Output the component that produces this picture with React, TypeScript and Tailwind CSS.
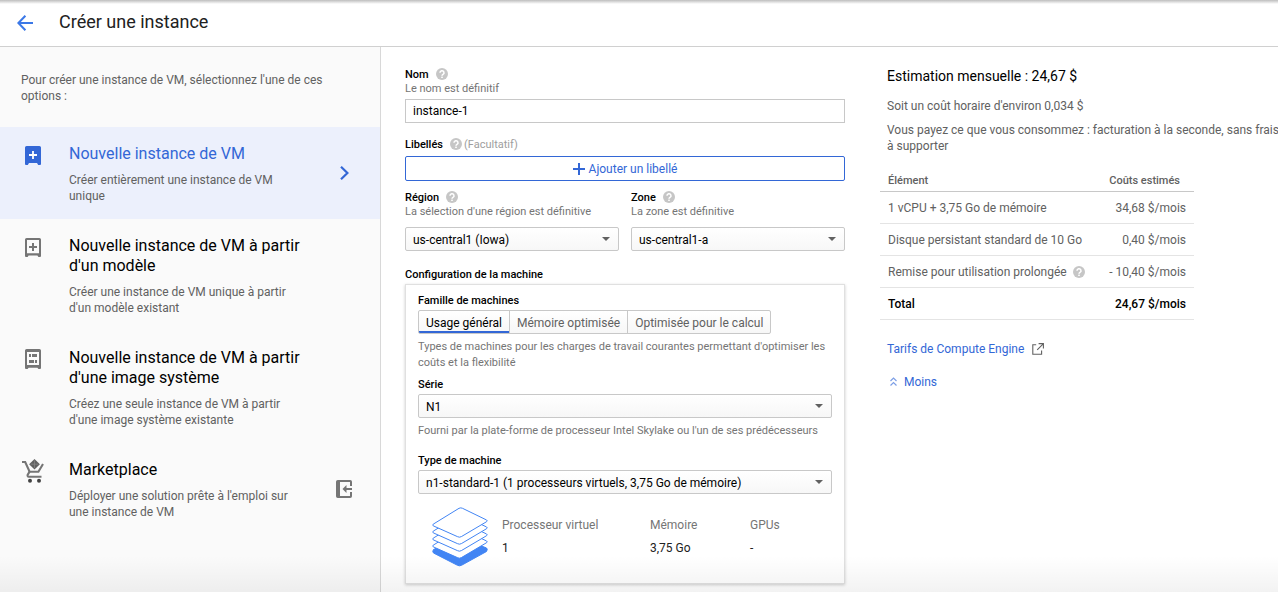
import type { ReactNode } from "react";

function HelpIcon() {
  return (
    <svg viewBox="0 0 12 12" className="size-3 shrink-0" role="img" aria-label="Aide">
      <circle cx="6" cy="6" r="6" fill="#c6c6c6" />
      <path d="M4 4.700a2 2 0 1 1 3 1.700c-.6.400-1 .7-1 1.300" fill="none" stroke="#fff" strokeWidth="1.500" />
      <rect x="5.200" y="8.600" width="1.600" height="1.400" fill="#fff" />
    </svg>
  );
}

function BackIcon() {
  return (
    <svg viewBox="0 0 16 16" className="size-4" fill="none" stroke="#3b78e7" strokeWidth="2" aria-hidden="true">
      <path d="M16 8H1.6M8.4.8 1.4 8l7 7.2" />
    </svg>
  );
}

function NewVmIcon() {
  return (
    <svg viewBox="0 0 16 19" className="h-[19px] w-4" aria-hidden="true">
      <path d="M1.6 0h12.8A1.6 1.6 0 0 1 16 1.6V18a1 1 0 0 1-1 1h-1.800L12 17H4l-1.200 2H1a1 1 0 0 1-1-1V1.6A1.6 1.6 0 0 1 1.6 0z" fill="#3367d6" />
      <path d="M8 5v8M4 9h8" stroke="#fff" strokeWidth="1.8" />
    </svg>
  );
}

function TemplateIcon() {
  return (
    <svg viewBox="0 0 16 19" className="h-[19px] w-4" aria-hidden="true">
      <path
        fillRule="evenodd"
        d="M1.6 0h12.8A1.6 1.6 0 0 1 16 1.6V18a1 1 0 0 1-1 1h-1.6l-1-1.6H3.600L2.600 19H1a1 1 0 0 1-1-1V1.6A1.6 1.6 0 0 1 1.6 0zM2 2v13.200h12V2z"
        fill="#757575"
      />
      <path d="M8 5v8M4 9h8" stroke="#757575" strokeWidth="2" />
    </svg>
  );
}

function ImageIcon() {
  return (
    <svg viewBox="0 0 16 20" className="h-5 w-4" aria-hidden="true">
      <path
        fillRule="evenodd"
        d="M1.6 0h12.8A1.6 1.6 0 0 1 16 1.6V19a1 1 0 0 1-1 1h-1.6l-1-1.2H3.600L2.600 20H1a1 1 0 0 1-1-1V1.6A1.6 1.6 0 0 1 1.6 0zM2 3v13h12V3z"
        fill="#757575"
      />
      <path d="M4 5h2v3H4zM7 5h5v3H7zM4 11h5v3H4zM10 11h2v3h-2z" fill="#757575" />
    </svg>
  );
}

function CartIcon() {
  return (
    <svg viewBox="0 0 22 24" className="h-6 w-[22px]" aria-hidden="true">
      <path d="M0 3h3.200l4.400 9.800h8.800L21 5" fill="none" stroke="#757575" strokeWidth="2.100" />
      <path d="m7.600 12.600-1.900 3.200c-.4.900 0 1.900 1 1.900h12.800" fill="none" stroke="#757575" strokeWidth="2.100" />
      <path d="m12.500 0 5.400 5.200-5.400 5.400-5.400-5.400z" fill="#616161" />
      <path d="M12.500 1.500v7.400M8.600 5.200h7.800" stroke="#8a8a8a" strokeWidth=".7" />
      <circle cx="8" cy="21.800" r="2" fill="#424242" />
      <circle cx="17" cy="21.800" r="2" fill="#424242" />
    </svg>
  );
}

function LaunchIcon() {
  return (
    <svg viewBox="0 0 16 18" className="h-[18px] w-4" aria-hidden="true">
      <path
        d="M1.800 0h12.400A1.800 1.800 0 0 1 16 1.800V6h-2V2H4v14h10v-4h2v4.200a1.800 1.800 0 0 1-1.800 1.800H1.800A1.800 1.800 0 0 1 0 16.200V1.800A1.800 1.800 0 0 1 1.800 0z"
        fill="#757575"
      />
      <path d="M6.500 9 10.500 5v3H16v2h-5.500v3z" fill="#757575" />
    </svg>
  );
}

function ChevronIcon() {
  return (
    <svg viewBox="0 0 9 14" className="h-3.5 w-[9px]" fill="none" stroke="#3367d6" strokeWidth="2.200" aria-hidden="true">
      <path d="m1 .8 6.400 6.200L1 13.200" />
    </svg>
  );
}

function ExternalIcon() {
  return (
    <svg viewBox="0 0 12 12" className="size-3" fill="none" stroke="#616161" strokeWidth="1.100" aria-hidden="true">
      <path d="M4.200 1.800H.8v9.400h8.800V7.600M6.600.6h4.800v4.800M11.200.8 5.200 6.800" />
    </svg>
  );
}

function StackIcon() {
  return (
    <svg viewBox="0 0 56 60" className="h-[60px] w-14 shrink-0" aria-hidden="true">
      <path
        d="M1.500 42.500 26 31q2-1 4 0l24.500 10q1.500 1 0 3.500L29.500 58.300q-2 1-4 0L1.500 46q-1.500-1.500 0-3.500z"
        fill="#4285f4"
        stroke="#4285f4"
      />
      {[21, 14, 7, 0].map((y) => (
        <path
          key={y}
          transform={`translate(0 ${y})`}
          d="M1.200 17.200 27 1.300q1.800-.9 3.500 0L54.600 13q1.200.8 0 1.700L29.400 29.600q-2 1.200-4 0L1.200 18.800q-1-.8 0-1.600z"
          fill="#fff"
          stroke="#4285f4"
          strokeWidth="1"
        />
      ))}
    </svg>
  );
}

type OptionProps = {
  icon: ReactNode;
  title: string;
  text: string;
  selected?: boolean;
  trailing?: ReactNode;
};

function Option({ icon, title, text, selected, trailing }: OptionProps) {
  return (
    <a href="#" className={`flex pt-[17px] pr-[27px] pb-[15px] pl-[22px] ${selected ? "bg-[#ecf0fc]" : ""}`}>
      <span className="-mt-px flex h-6 w-[22px] shrink-0 items-center justify-center">{icon}</span>
      <span className="ml-[25px] flex w-[238px] flex-col gap-2">
        <span className={`text-base leading-5 ${selected ? "text-[#3367d6]" : "text-black"}`}>{title}</span>
        <span className="text-xs leading-4 text-[#616161]">{text}</span>
      </span>
      <span className="ml-auto flex w-[18px] items-center justify-center pb-0.5">{trailing}</span>
    </a>
  );
}

function Label({ htmlFor, children, help }: { htmlFor: string; children: ReactNode; help?: boolean }) {
  return (
    <div className="flex h-3.5 items-center gap-[7px]">
      <label htmlFor={htmlFor} className="text-[11px] leading-[14px] font-medium text-black">
        {children}
      </label>
      {help && (
        <span className="pb-0.5">
          <HelpIcon />
        </span>
      )}
    </div>
  );
}

function Select({ id, value }: { id: string; value: string }) {
  return (
    <div className="relative">
      <select
        id={id}
        className="block h-6 w-full appearance-none rounded-[2px] border border-[#c8c8c8] bg-linear-to-b from-white to-[#f7f7f7] px-[7px] pt-0.5 text-xs text-black"
      >
        <option>{value}</option>
      </select>
      <svg viewBox="0 0 8 4" className="pointer-events-none absolute top-2.5 right-[9px] h-1 w-2" aria-hidden="true">
        <path d="M0 0h8L4 4z" fill="#616161" />
      </svg>
    </div>
  );
}

const hint = "text-[11px] leading-[14px] text-[#757575]";

function Form() {
  return (
    <form className="w-[440px] shrink-0">
      <Label htmlFor="name" help>Nom</Label>
      <p className={hint}>Le nom est définitif</p>
      <input
        id="name"
        defaultValue="instance-1"
        className="mt-[3px] block h-6 w-full border border-[#c8c8c8] bg-white px-[7px] text-xs text-black"
      />

      <div className="mt-[15px] flex items-center gap-0.5">
        <Label htmlFor="labels" help>Libellés</Label>
        <span className="text-[11px] leading-[14px] text-[#9e9e9e]">(Facultatif)</span>
      </div>
      <button
        id="labels"
        type="button"
        className="mt-1 flex h-[25px] w-full items-center justify-center gap-1 rounded-[2px] border border-[#3367d6] text-xs text-[#3367d6]"
      >
        <svg viewBox="0 0 12 12" className="size-3" stroke="#3367d6" strokeWidth="2" aria-hidden="true">
          <path d="M6 0v12M0 6h12" />
        </svg>
        Ajouter un libellé
      </button>

      <div className="mt-2.5 grid grid-cols-2 gap-3">
        <div>
          <Label htmlFor="region" help>Région</Label>
          <p className={`${hint} mb-2`}>La sélection d'une région est définitive</p>
          <Select id="region" value="us-central1 (Iowa)" />
        </div>
        <div>
          <Label htmlFor="zone" help>Zone</Label>
          <p className={`${hint} mb-2`}>La zone est définitive</p>
          <Select id="zone" value="us-central1-a" />
        </div>
      </div>

      <h2 className="mt-[17px] text-[11px] leading-[14px] font-medium text-black">Configuration de la machine</h2>
      <section className="mt-0.5 border border-[#e0e0e0] px-3 pt-[9px] pb-4 shadow-[0_1px_3px_rgba(0,0,0,0.2)]">
        <h3 className="text-[11px] leading-[14px] font-medium text-black">Famille de machines</h3>
        <div
          role="tablist"
          className="mt-0.5 inline-flex h-6 overflow-hidden rounded-[2px] border border-[#c8c8c8] bg-linear-to-b from-white to-[#f7f7f7] align-top text-xs text-[#616161]"
        >
          <button type="button" role="tab" aria-selected="true" className="border-b-2 border-[#3367d6] px-[7px] pt-1 text-black">
            Usage général
          </button>
          <button type="button" role="tab" aria-selected="false" className="border-x border-[#c8c8c8] px-[7px] pt-0.5">
            Mémoire optimisée
          </button>
          <button type="button" role="tab" aria-selected="false" className="px-[7px] pt-0.5">
            Optimisée pour le calcul
          </button>
        </div>
        <p className="mt-[5px] mb-[7px] text-[11px] leading-4 text-[#757575]">
          Types de machines pour les charges de travail courantes permettant d'optimiser les coûts et la flexibilité
        </p>
        <Label htmlFor="series">Série</Label>
        <div className="mt-0.5">
          <Select id="series" value="N1" />
        </div>
        <p className="mt-[5px] mb-[15px] text-[11px] leading-4 text-[#757575]">
          Fourni par la plate-forme de processeur Intel Skylake ou l'un de ses prédécesseurs
        </p>
        <Label htmlFor="type">Type de machine</Label>
        <div className="mt-0.5">
          <Select id="type" value="n1-standard-1 (1 processeurs virtuels, 3,75 Go de mémoire)" />
        </div>
        <div className="mt-[13px] flex pl-3.5">
          <StackIcon />
          <dl className="ml-3.5 grid grow grid-cols-[148px_100px_1fr] pt-2.5 text-xs leading-4">
            <div>
              <dt className="text-[#757575]">Processeur virtuel</dt>
              <dd className="mt-[7px] text-[#212121]">1</dd>
            </div>
            <div>
              <dt className="text-[#757575]">Mémoire</dt>
              <dd className="mt-[7px] text-[#212121]">3,75 Go</dd>
            </div>
            <div>
              <dt className="text-[#757575]">GPUs</dt>
              <dd className="mt-[7px] text-[#212121]">-</dd>
            </div>
          </dl>
        </div>
      </section>
    </form>
  );
}

const costs = [
  { item: "1 vCPU + 3,75 Go de mémoire", cost: "34,68 $/mois", help: false },
  { item: "Disque persistant standard de 10 Go", cost: "0,40 $/mois", help: false },
  { item: "Remise pour utilisation prolongée", cost: "- 10,40 $/mois", help: true },
];

function Estimate() {
  return (
    <section className="min-w-0 grow text-xs leading-4 text-[#616161]">
      <h2 className="text-sm leading-4 text-black">Estimation mensuelle : 24,67 $</h2>
      <p className="mt-[14px]">Soit un coût horaire d'environ 0,034 $</p>
      <p className="mt-2 -mr-1">Vous payez ce que vous consommez : facturation à la seconde, sans frais à supporter</p>
      <table className="mt-[15px] -ml-[7px] w-[314px] border-collapse">
        <thead>
          <tr className="h-[22px] border-b border-[#c8c8c8] text-[11px]">
            <th className="pt-0.5 pl-2 text-left font-medium">Élément</th>
            <th className="pt-0.5 pr-3.5 text-right font-medium">Coûts estimés</th>
          </tr>
        </thead>
        <tbody>
          {costs.map((c) => (
            <tr key={c.item} className="h-8 border-b border-[#e4e4e4]">
              <td className="pt-0.5 pl-2">
                <span className="flex items-center gap-1.5">
                  {c.item}
                  {c.help && <HelpIcon />}
                </span>
              </td>
              <td className="pt-0.5 pr-2 text-right">{c.cost}</td>
            </tr>
          ))}
          <tr className="h-8 border-b border-[#e4e4e4] font-medium text-black">
            <td className="pt-0.5 pl-2">Total</td>
            <td className="pt-0.5 pr-2 text-right">24,67 $/mois</td>
          </tr>
        </tbody>
      </table>
      <a href="#" className="mt-[21px] flex items-center gap-2 text-[#3367d6]">
        Tarifs de Compute Engine
        <ExternalIcon />
      </a>
      <button type="button" className="mt-[17px] ml-[3px] flex items-center gap-[7px] text-[#3367d6]">
        <svg viewBox="0 0 7 9" className="h-[9px] w-[7px]" fill="none" stroke="#7d9fe6" strokeWidth="1.200" aria-hidden="true">
          <path d="m.5 4 3-3 3 3M.5 8.500l3-3 3 3" />
        </svg>
        Moins
      </button>
    </section>
  );
}

export default function App() {
  return (
    <div className="relative flex min-h-screen flex-col overflow-hidden bg-white font-['Roboto',sans-serif]">
      <div className="absolute inset-x-0 top-0 h-1 bg-linear-to-b from-[#bdbdbd] to-transparent" />
      <header className="flex h-[47px] shrink-0 items-center gap-[26px] border-b border-[#d0d0d0] pl-[17px]">
        <a href="#" aria-label="Retour">
          <BackIcon />
        </a>
        <h1 className="pb-0.5 text-lg leading-6 text-[#212121]">Créer une instance</h1>
      </header>
      <div className="flex grow">
        <aside className="w-[381px] shrink-0 border-r border-[#d8d8d8] bg-[#fafafa]">
          <p className="px-[21px] pt-[25px] pb-[23px] text-xs leading-4 text-[#616161]">
            Pour créer une instance de VM, sélectionnez l'une de ces options :
          </p>
          <nav>
            <Option
              selected
              icon={<NewVmIcon />}
              title="Nouvelle instance de VM"
              text="Créer entièrement une instance de VM unique"
              trailing={<ChevronIcon />}
            />
            <Option
              icon={<TemplateIcon />}
              title="Nouvelle instance de VM à partir d'un modèle"
              text="Créer une instance de VM unique à partir d'un modèle existant"
            />
            <Option
              icon={<ImageIcon />}
              title="Nouvelle instance de VM à partir d'une image système"
              text="Créez une seule instance de VM à partir d'une image système existante"
            />
            <Option
              icon={<CartIcon />}
              title="Marketplace"
              text="Déployer une solution prête à l'emploi sur une instance de VM"
              trailing={<LaunchIcon />}
            />
          </nav>
        </aside>
        <main className="flex min-w-0 grow gap-[42px] pt-[21px] pl-6">
          <Form />
          <Estimate />
        </main>
      </div>
      <div className="pointer-events-none absolute inset-x-0 bottom-0 h-9 bg-linear-to-b from-transparent to-black/5" />
    </div>
  );
}
